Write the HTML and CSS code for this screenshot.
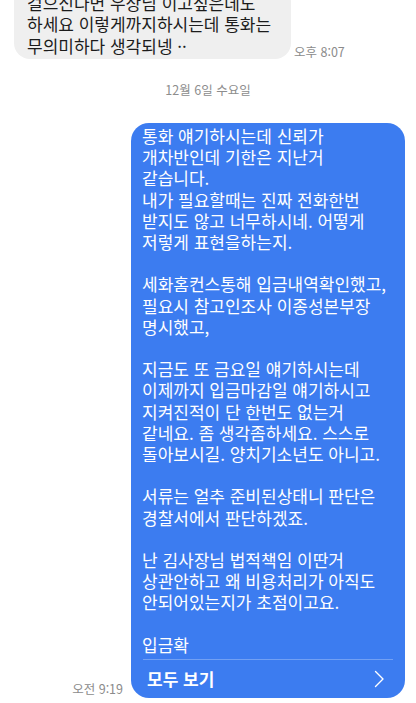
FILE: index.html
```html
<!DOCTYPE html>
<html lang="ko">
<head>
<meta charset="utf-8">
<title>메시지</title>
<link rel="stylesheet" href="styles.css">
</head>
<body>
<div class="chat">
  <div class="row recv">
    <div class="bubble gray">
      <p>걸으신다면 우상님 이고싶은데도<br>하세요 이렇게까지하시는데 통화는<br>무의미하다 생각되넹 ··</p>
    </div>
    <span class="time">오후 8:07</span>
  </div>

  <div class="date">12월 6일 수요일</div>

  <div class="row sent">
    <span class="time">오전 9:19</span>
    <div class="bubble blue">
      <div class="body">
        <p>통화 얘기하시는데 신뢰가<br>개차반인데 기한은 지난거<br>같습니다.<br>내가 필요할때는 진짜 전화한번<br>받지도 않고 너무하시네. 어떻게<br>저렇게 표현을하는지.</p>
        <p>세화홈컨스통해 입금내역확인했고,<br>필요시 참고인조사 이종성본부장<br>명시했고,</p>
        <p>지금도 또 금요일 얘기하시는데<br>이제까지 입금마감일 얘기하시고<br>지켜진적이 단 한번도 없는거<br>같네요. 좀 생각좀하세요. 스스로<br>돌아보시길. 양치기소년도 아니고.</p>
        <p>서류는 얼추 준비된상태니 판단은<br>경찰서에서 판단하겠죠.</p>
        <p>난 김사장님 법적책임 이딴거<br>상관안하고 왜 비용처리가 아직도<br>안되어있는지가 초점이고요.</p>
        <p>입금확</p>
      </div>
      <div class="divider"></div>
      <div class="more">
        <span class="more-label">모두 보기</span>
        <svg class="chev" width="11" height="18" viewBox="0 0 11 18" aria-hidden="true">
          <path d="M1.5 1.5 L9 9 L1.5 16.5" fill="none" stroke="#ffffff" stroke-width="1.4" stroke-linecap="round" stroke-linejoin="round"/>
        </svg>
      </div>
    </div>
  </div>
</div>
</body>
</html>
```

FILE: styles.css
```css
html, body {
  margin: 0;
  padding: 0;
  background: #ffffff;
}

body {
  font-family: "Noto Sans CJK KR", "Noto Sans", "Liberation Sans", sans-serif;
  color: #1c1c1c;
}

.chat {
  height: 703px;
  box-sizing: border-box;
  display: flex;
  flex-direction: column;
  justify-content: flex-end;
  overflow: hidden;
  padding-bottom: 5px;
}

.row {
  display: flex;
  align-items: flex-end;
}

.recv {
  padding-left: 14px;
  gap: 3px;
}

.sent {
  justify-content: flex-end;
  padding-right: 11px;
  gap: 8px;
}

.bubble p {
  margin: 0;
  white-space: nowrap;
}

.gray {
  background: #efefef;
  border-radius: 16px;
  width: 277px;
  box-sizing: border-box;
  padding: 6px 10px 3px 13px;
  font-size: 17px;
  line-height: 21.5px;
}

.time {
  font-size: 12.5px;
  line-height: 14px;
  color: #8b8b8b;
  white-space: nowrap;
}

.recv .time {
  padding-bottom: 0;
}

.sent .time {
  padding-bottom: 2px;
}

.date {
  text-align: center;
  font-size: 12.5px;
  line-height: 16px;
  color: #8d8d8d;
  margin: 23px 0 25px;
}

.blue {
  background: #3c7cf0;
  color: #ffffff;
  border-radius: 18px;
  width: 274px;
  box-sizing: border-box;
  overflow: hidden;
}

.body {
  padding: 2px 8px 0 11px;
  font-size: 17px;
  line-height: 21.2px;
}

.body p + p {
  margin-top: 21.2px;
}

.divider {
  height: 1px;
  margin: 4px 12px 0;
  background: rgba(255, 255, 255, 0.28);
}

.more {
  height: 38px;
  display: flex;
  align-items: center;
  justify-content: space-between;
  padding: 0 20px 0 16px;
}

.more-label {
  font-size: 17px;
  font-weight: 700;
  line-height: 20px;
}

.chev {
  display: block;
}
```
